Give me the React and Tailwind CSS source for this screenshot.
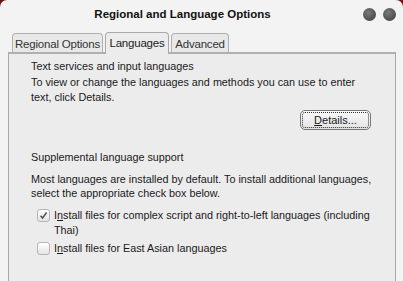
import React from 'react';

const font = { fontFamily: '"Liberation Sans", Arial, sans-serif' };

const Tab = ({ label, active, width }) => (
  <div
    className={
      (active
        ? 'relative z-10 -mb-[2px] h-[22px] pt-[2px] rounded-t-[4px] border border-b-0 border-[#a9a9a9] bg-[#ececec] text-[#222] '
        : 'h-[19px] pt-[2px] rounded-t-[4px] border border-b-0 border-[#b0b0b0] bg-[#e8e8e8] text-[#333] ') +
      'text-center text-[11.5px] tracking-[-0.2px] ' +
      width
    }
  >
    {label}
  </div>
);

const Check = ({ checked }) => (
  <div className="mt-[1px] flex h-[13px] w-[13px] shrink-0 items-center justify-center rounded-[3px] border border-[#b5b5b5] bg-gradient-to-b from-[#ffffff] to-[#e4e4e4]">
    {checked && (
      <svg width="9" height="9" viewBox="0 0 9 9">
        <path d="M1.5 4.8 L3.6 7 L7.6 1.6" fill="none" stroke="#555" strokeWidth="1.6" />
      </svg>
    )}
  </div>
);

export default function App() {
  return (
    <div className="h-[281px] w-[403px] overflow-hidden bg-[#6b1515]" style={font}>
      <div className="h-full w-full rounded-t-[7px] bg-[#f3f3f3]">
        <div className="relative flex h-[29px] items-center justify-center">
          <span className="ml-[-38px] text-[11.5px] font-bold text-[#111]">Regional and Language Options</span>
          <div className="absolute right-[7px] top-[8px] flex gap-[7px]">
            <div className="h-[13px] w-[13px] rounded-full bg-[radial-gradient(circle_at_40%_35%,#7a7a7a,#3a3a3a)]" />
            <div className="h-[13px] w-[13px] rounded-full bg-[radial-gradient(circle_at_40%_35%,#7a7a7a,#3a3a3a)]" />
          </div>
        </div>
        <div className="flex h-[23px] items-end gap-[2px] pl-[12px]">
          <Tab label="Regional Options" width="w-[91px]" />
          <Tab label="Languages" width="w-[64px]" active />
          <Tab label="Advanced" width="w-[58px]" />
        </div>
        <div className="ml-[8px] mr-[7px] h-[240px] border-x border-t-[2px] border-[#a8a8a8] border-t-[#b0b0b0] bg-[#ececec] pl-[22px] pr-[10px] pt-[5px] text-[10.8px] leading-[15px] text-[#1a1a1a]">
          <div>Text services and input languages</div>
          <div className="mt-[1px]">
            To view or change the languages and methods you can use to enter
            <br />
            text, click Details.
          </div>
          <div className="mt-[5px] flex justify-end pr-[14px]">
            <button className="h-[20px] w-[71px] rounded-[5px] border border-[#777] bg-gradient-to-b from-[#fafafa] to-[#e3e3e3] text-[11px] outline-dotted outline-1 -outline-offset-[3px] outline-[#333]">
              <span className="underline">D</span>etails...
            </button>
          </div>
          <div className="mt-[20px]">Supplemental language support</div>
          <div className="mt-[7px] leading-[14px]">
            Most languages are installed by default. To install additional languages,
            <br />
            select the appropriate check box below.
          </div>
          <div className="mt-[8px] flex gap-[4px] pl-[6px]">
            <Check checked />
            <div>
              I<span className="underline">n</span>stall files for complex script and right-to-left languages (including
              <br />
              Thai)
            </div>
          </div>
          <div className="mt-[3px] flex gap-[4px] pl-[6px]">
            <Check />
            <div>
              I<span className="underline">n</span>stall files for East Asian languages
            </div>
          </div>
        </div>
      </div>
    </div>
  );
}
